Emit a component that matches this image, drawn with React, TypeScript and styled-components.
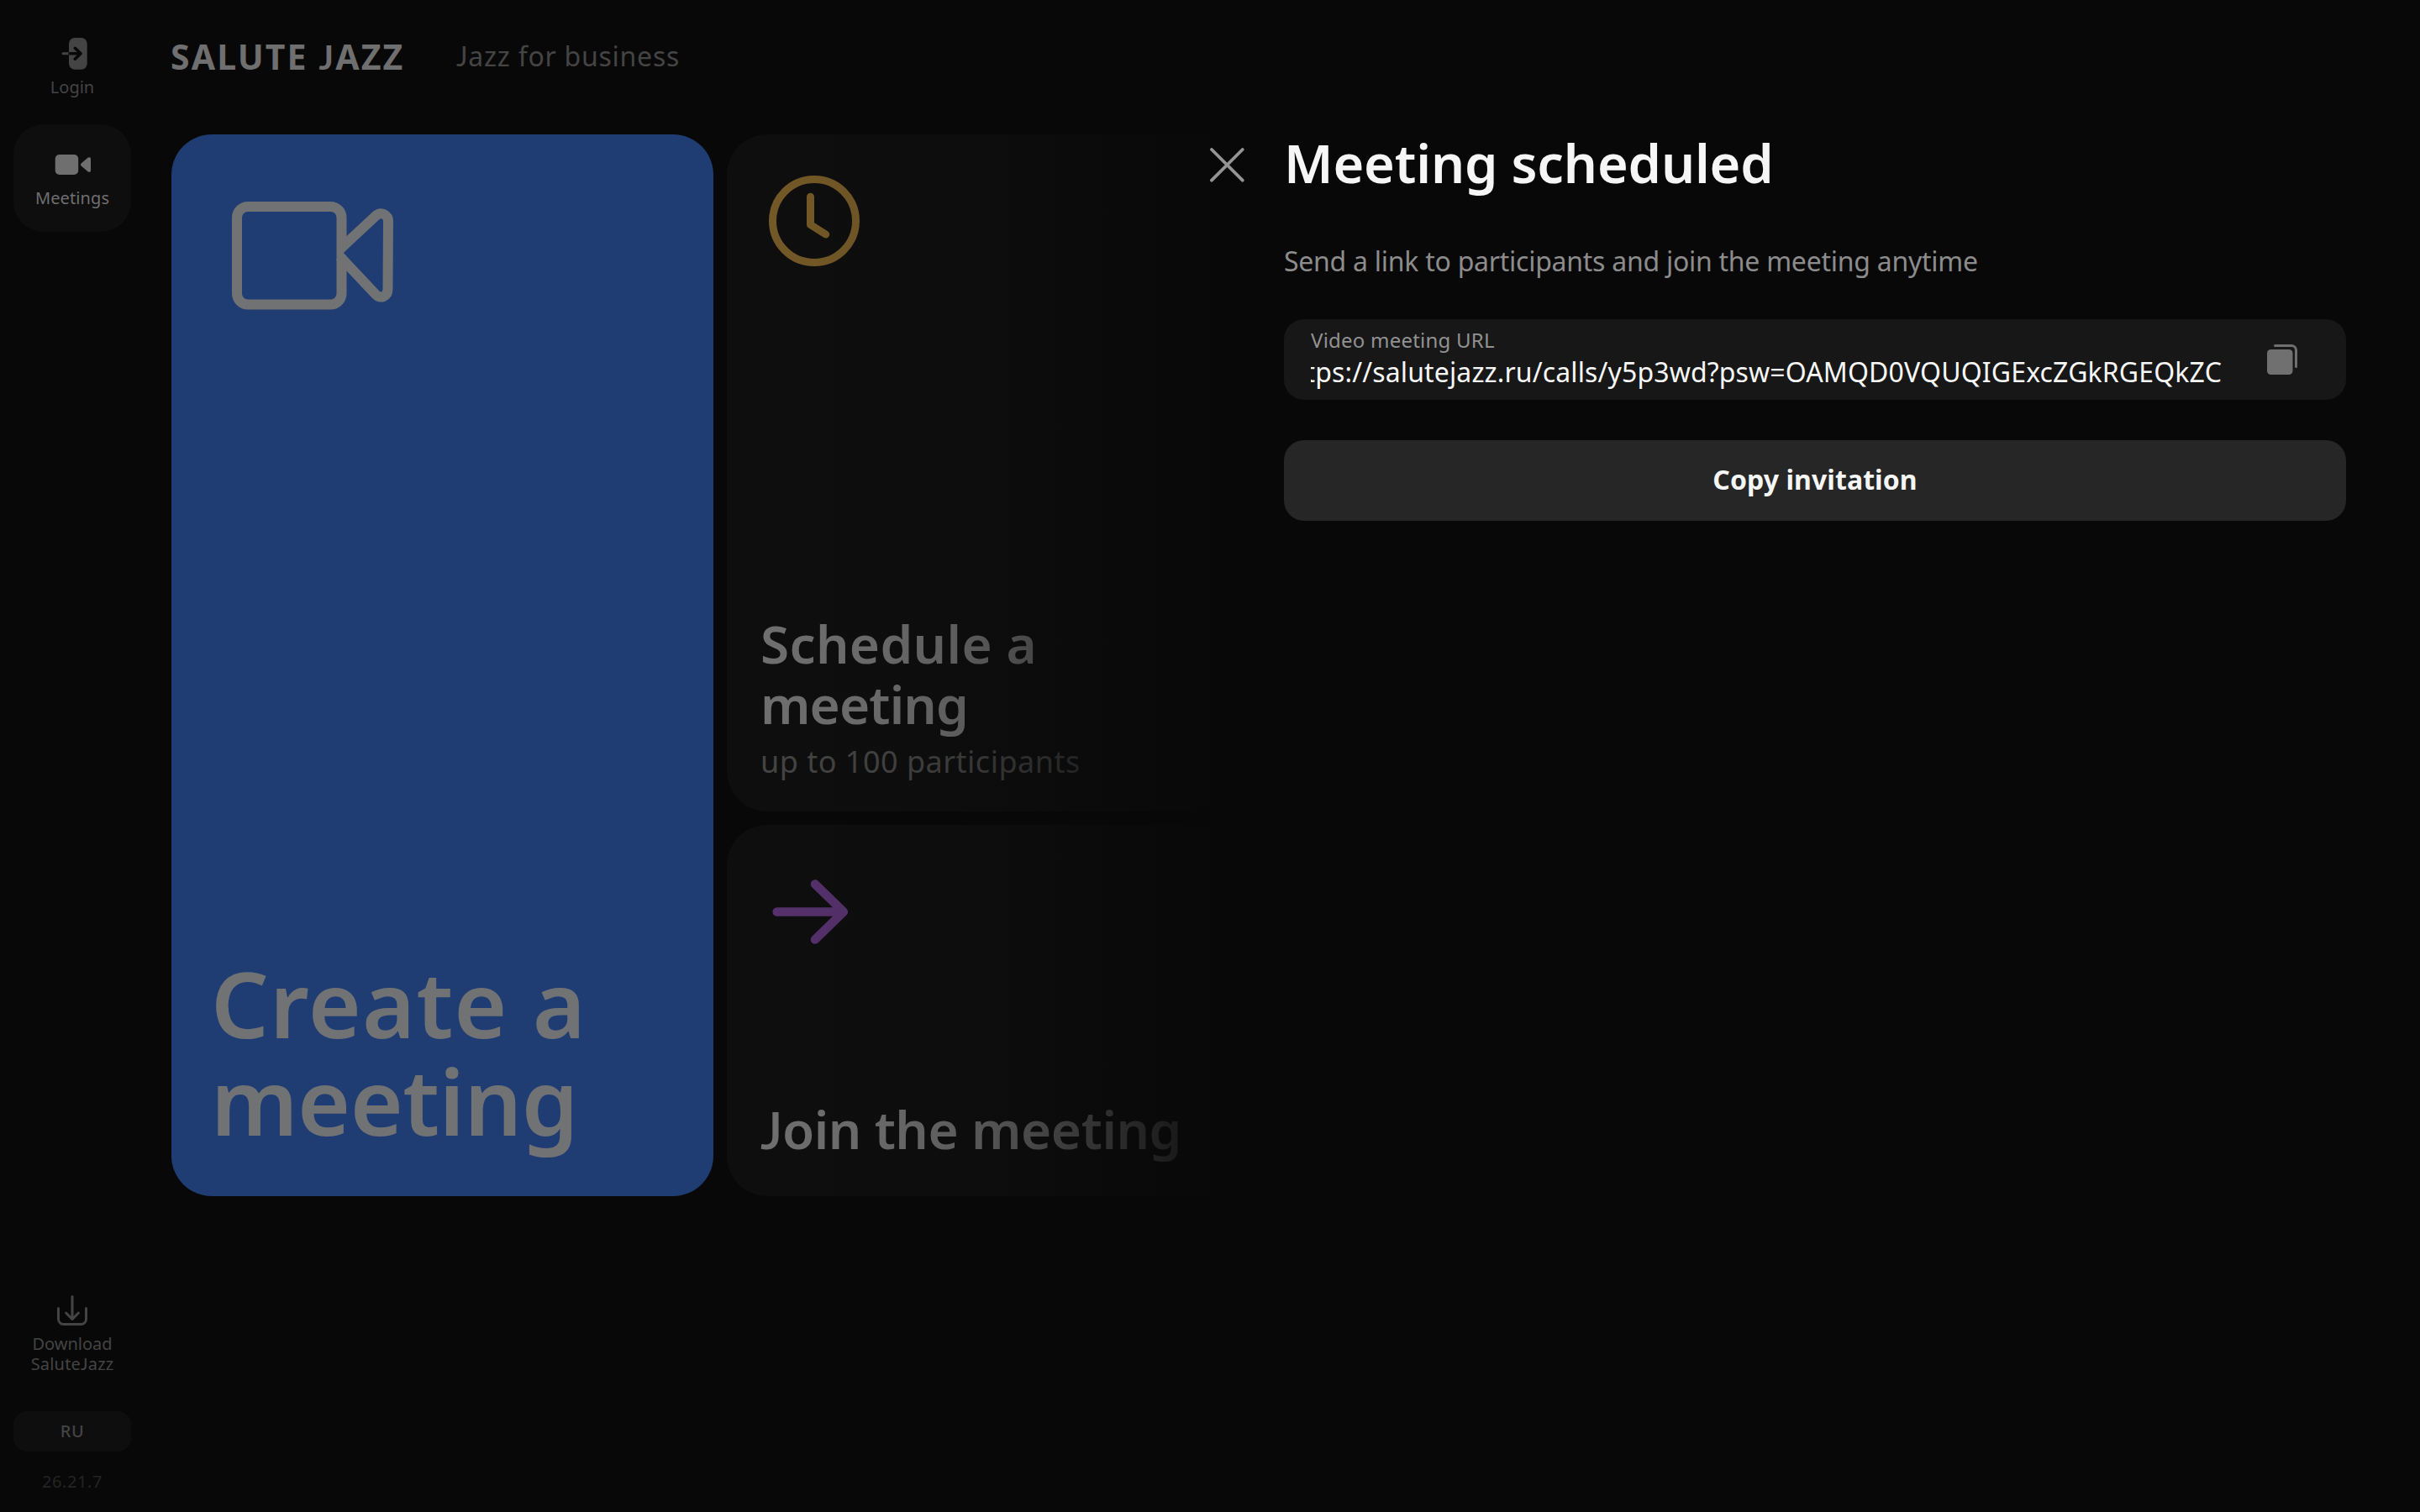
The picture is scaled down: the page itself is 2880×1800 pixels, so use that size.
import React from "react";
import styled, { createGlobalStyle } from "styled-components";

const color = {
  page: "#080808",
  surface: "#0e0e0e",
  blue: "#1f3d73",
  onBlue: "#707274",
  primary: "#6f6f6f",
  secondary: "#444444",
  tertiary: "#242424",
  amber: "#745927",
  violet: "#56316c",
  field: "#171717",
  button: "#262626",
  white: "#f6f6f6",
  muted: "#929292",
};

const GlobalStyle = createGlobalStyle`
  *, *::before, *::after { box-sizing: border-box; }
  body {
    margin: 0;
    background: ${color.page};
    font-family: "Noto Sans", "Open Sans", sans-serif;
  }
  h1, h2, p { margin: 0; }
  button { font: inherit; color: inherit; border: 0; padding: 0; background: none; }
  svg { display: block; flex: none; }
`;

const Shell = styled.div`
  position: relative;
  display: flex;
  width: 2880px;
  height: 1800px;
  overflow: hidden;
  background: ${color.page};
`;

const Sidebar = styled.nav`
  display: flex;
  flex-direction: column;
  flex: none;
  width: 172px;
  padding: 16px 16px 24px;
`;

const NavItem = styled.button<{ $active?: boolean; $tall?: boolean }>`
  display: flex;
  flex-direction: column;
  align-items: center;
  width: 140px;
  height: ${(p) => (p.$tall ? 152 : 128)}px;
  margin-bottom: ${(p) => (p.$tall ? 16 : 4)}px;
  padding-top: 24px;
  border-radius: 36px;
  background: ${(p) => (p.$active ? color.surface : "transparent")};
  color: ${(p) => (p.$active ? color.primary : color.secondary)};
`;

const NavLabel = styled.span<{ $track?: number; $first?: boolean }>`
  margin-top: ${(p) => (p.$first === false ? 0 : 4)}px;
  font-size: 20px;
  line-height: 24px;
  letter-spacing: ${(p) => p.$track ?? 0}px;
`;

const Spacer = styled.div`
  flex: 1;
`;

const LanguageButton = styled.button`
  width: 140px;
  height: 48px;
  border-radius: 16px;
  background: ${color.surface};
  color: ${color.secondary};
  font-size: 20px;
  font-weight: 500;
  line-height: 48px;
  letter-spacing: 0.6px;
`;

const Version = styled.span`
  width: 140px;
  margin-top: 24px;
  text-align: center;
  color: ${color.tertiary};
  font-size: 20px;
  line-height: 24px;
  letter-spacing: 0.58px;
`;

const Main = styled.main`
  display: flex;
  flex-direction: column;
  flex: none;
  padding-left: 32px;
`;

const Header = styled.header`
  display: flex;
  align-items: flex-start;
  height: 160px;
  padding-top: 43px;
`;

const Brand = styled.h1`
  width: 340px;
  color: ${color.primary};
  font-size: 41px;
  font-weight: 700;
  line-height: 48px;
  letter-spacing: 2.1px;
  margin-left: -1px;
`;

const HeaderLink = styled.span`
  margin-top: 4px;
  color: ${color.secondary};
  font-size: 32px;
  line-height: 40px;
  letter-spacing: 0.75px;
`;

/* Capital J that stands on the baseline instead of descending below it. */
const J = styled.span`
  font-family: Lato, "Noto Sans", sans-serif;
  line-height: 0;
`;

const Tiles = styled.div`
  display: grid;
  grid-template-columns: 645px 645px;
  grid-template-rows: 806px 442px;
  gap: 16px;
`;

const Tile = styled.section<{ $big?: boolean; $bottom: number; $iconTop: number; $iconLeft: number }>`
  display: flex;
  flex-direction: column;
  justify-content: space-between;
  grid-row: ${(p) => (p.$big ? "1 / span 2" : "auto")};
  padding: ${(p) => p.$iconTop}px 0 ${(p) => p.$bottom}px ${(p) => (p.$big ? 47 : 40)}px;
  border-radius: 48px;
  background: ${(p) => (p.$big ? color.blue : color.surface)};
  color: ${(p) => (p.$big ? color.onBlue : color.primary)};
  & > svg { margin-left: ${(p) => p.$iconLeft}px; }
`;

const TileTitle = styled.h2<{ $big?: boolean }>`
  font-size: ${(p) => (p.$big ? 108 : 62)}px;
  line-height: ${(p) => (p.$big ? 116 : 72)}px;
  font-weight: 600;
`;

const Line = styled.span<{ $track: number }>`
  display: block;
  white-space: nowrap;
  letter-spacing: ${(p) => p.$track}px;
`;

const TileNote = styled.p`
  margin-top: 11px;
  color: ${color.secondary};
  font-size: 36px;
  line-height: 44px;
  letter-spacing: 0.49px;
`;

const Overlay = styled.div`
  position: absolute;
  inset: 0;
  display: flex;
`;

const Fade = styled.div`
  width: 1440px;
  background: linear-gradient(
    90deg,
    rgba(8, 8, 8, 0) 900px,
    rgba(8, 8, 8, 0.06) 1040px,
    rgba(8, 8, 8, 0.18) 1140px,
    rgba(8, 8, 8, 0.36) 1220px,
    rgba(8, 8, 8, 0.58) 1300px,
    rgba(8, 8, 8, 0.82) 1400px,
    rgba(8, 8, 8, 0.9) 1440px
  );
`;

const Panel = styled.aside`
  display: flex;
  align-items: flex-start;
  gap: 48px;
  width: 1440px;
  padding-top: 158px;
  background: ${color.page};
`;

const CloseButton = styled.button`
  width: 40px;
  margin-top: 18px;
  color: #949494;
`;

const PanelBody = styled.div`
  display: flex;
  flex-direction: column;
  width: 1264px;
`;

const PanelTitle = styled.h2`
  color: ${color.white};
  font-size: 63px;
  font-weight: 600;
  line-height: 72px;
  letter-spacing: -0.15px;
`;

const PanelText = styled.p`
  margin-top: 61px;
  color: #8c8c8c;
  font-size: 32px;
  line-height: 40px;
  letter-spacing: -0.26px;
  white-space: nowrap;
`;

const Field = styled.div`
  display: flex;
  gap: 54px;
  height: 96px;
  margin-top: 49px;
  padding: 9px 32px 0;
  border-radius: 24px;
  background: ${color.field};
`;

const FieldBody = styled.div`
  display: flex;
  flex-direction: column;
  width: 1084px;
`;

const FieldLabel = styled.span`
  color: ${color.muted};
  font-size: 24px;
  line-height: 32px;
  letter-spacing: 0.23px;
`;

const FieldValue = styled.span`
  display: flex;
  justify-content: flex-end;
  overflow: hidden;
  margin-top: 2px;
  color: ${color.white};
  font-size: 32px;
  line-height: 40px;
  letter-spacing: 0.13px;
  white-space: nowrap;
`;

const CopyIconButton = styled.button`
  align-self: flex-start;
  margin-top: 21px;
  color: #707070;
`;

const InviteButton = styled.button`
  height: 96px;
  margin-top: 48px;
  padding-bottom: 2px;
  border-radius: 24px;
  background: ${color.button};
  color: ${color.white};
  font-size: 32px;
  font-weight: 700;
  line-height: 94px;
  letter-spacing: 0.08px;
`;

const LoginIcon = () => (
  <svg width="48" height="48" viewBox="0 0 48 48" fill="none" strokeLinecap="round" strokeLinejoin="round">
    <rect x="20" y="5" width="21.7" height="37.7" rx="7" fill="currentColor" />
    <path d="M13 23.8H20" stroke="currentColor" strokeWidth="3" />
    <path d="M21 23.8H34M27.3 17.3L34 23.8L27.3 30.2" stroke={color.page} strokeWidth="3.6" />
  </svg>
);

const CameraSolidIcon = () => (
  <svg width="48" height="48" viewBox="0 0 48 48" fill="currentColor">
    <rect x="3.7" y="12" width="27.5" height="24" rx="5" />
    <path d="M34.6 22.6L42.5 15.7C43.6 14.7 46 15 46 16.8V31.2C46 33 43.6 33.3 42.5 32.3L34.6 25.4C33.8 24.6 33.8 23.4 34.6 22.6Z" />
  </svg>
);

const DownloadIcon = () => (
  <svg width="48" height="48" viewBox="0 0 48 48" fill="none" stroke="currentColor" strokeWidth="3" strokeLinecap="round" strokeLinejoin="round">
    <path d="M7.5 21.5V34.5A6 6 0 0 0 13.5 40.5H34.5A6 6 0 0 0 40.5 34.5V21.5" />
    <path d="M24 7.5V34.5M16.6 27L24 34.5L31.4 27" />
  </svg>
);

const CameraIcon = () => (
  <svg width="192" height="129" viewBox="0 0 192 129" fill="none">
    <rect x="6" y="6" width="124.5" height="116.5" rx="13" stroke="currentColor" strokeWidth="12" />
    <path d="M132.7 61L177 19.5V108Z" fill={color.blue} />
    <path
      d="M128.6 56.6L171.6 16.6C177.5 11.5 186 15.5 186 23.5L185.5 104C185.5 113 176.5 116.5 171.3 110.8L128.3 65.1"
      stroke="currentColor"
      strokeWidth="12"
    />
  </svg>
);

const ClockIcon = () => (
  <svg width="108" height="108" viewBox="0 0 108 108" fill="none" stroke={color.amber} strokeWidth="9" strokeLinecap="round" strokeLinejoin="round">
    <circle cx="54" cy="54" r="49.5" />
    <path d="M49.5 25.2V58.5L67.7 70" />
  </svg>
);

const ArrowIcon = () => (
  <svg width="91" height="77" viewBox="0 0 91 77" fill="none" stroke={color.violet} strokeWidth="10.5" strokeLinecap="round" strokeLinejoin="round">
    <path d="M5.7 38.5H84.6M51 5.5L84.9 38.5L51 71.5" />
  </svg>
);

const CloseIcon = () => (
  <svg width="41" height="41" viewBox="0 0 41 41" fill="none" stroke="currentColor" strokeWidth="3.8" strokeLinecap="round">
    <path d="M2 2L38.7 38.7M38.7 2L2 38.7" />
  </svg>
);

const CopyIcon = () => (
  <svg width="36" height="36" viewBox="0 0 36 36" fill="none">
    <rect x="0" y="6" width="30.5" height="30" rx="4.5" fill="currentColor" />
    <path d="M9.5 1.5H29A5.5 5.5 0 0 1 34.5 7V26.5" stroke="currentColor" strokeWidth="3" strokeLinecap="round" />
  </svg>
);

export default function App() {
  return (
    <>
      <GlobalStyle />
      <Shell>
        <Sidebar>
          <NavItem>
            <LoginIcon />
            <NavLabel>Login</NavLabel>
          </NavItem>
          <NavItem $active>
            <CameraSolidIcon />
            <NavLabel $track={0.1}>Meetings</NavLabel>
          </NavItem>
          <Spacer />
          <NavItem $tall>
            <DownloadIcon />
            <NavLabel>Download</NavLabel>
            <NavLabel $first={false} $track={0.2}>
              Salute<J>J</J>azz
            </NavLabel>
          </NavItem>
          <LanguageButton>RU</LanguageButton>
          <Version>26.21.7</Version>
        </Sidebar>
        <Main>
          <Header>
            <Brand>
              SALUTE <J>J</J>AZZ
            </Brand>
            <HeaderLink>
              <J>J</J>azz for business
            </HeaderLink>
          </Header>
          <Tiles>
            <Tile $big $bottom={55} $iconTop={80} $iconLeft={25}>
              <CameraIcon />
              <TileTitle $big>
                <Line $track={1.1}>Create a</Line>
                <Line $track={-0.6}>meeting</Line>
              </TileTitle>
            </Tile>
            <Tile $bottom={37} $iconTop={49} $iconLeft={10}>
              <ClockIcon />
              <div>
                <TileTitle>
                  <Line $track={0.35}>Schedule a</Line>
                  <Line $track={-0.9}>meeting</Line>
                </TileTitle>
                <TileNote>up to 100 participants</TileNote>
              </div>
            </Tile>
            <Tile $bottom={44} $iconTop={65} $iconLeft={14}>
              <ArrowIcon />
              <TileTitle>
                <Line $track={-0.45}>
                  <J>J</J>oin the meeting
                </Line>
              </TileTitle>
            </Tile>
          </Tiles>
        </Main>
        <Overlay>
          <Fade />
          <Panel>
            <CloseButton aria-label="Close">
              <CloseIcon />
            </CloseButton>
            <PanelBody>
              <PanelTitle>Meeting scheduled</PanelTitle>
              <PanelText>Send a link to participants and join the meeting anytime</PanelText>
              <Field>
                <FieldBody>
                  <FieldLabel>Video meeting URL</FieldLabel>
                  <FieldValue>https://salutejazz.ru/calls/y5p3wd?psw=OAMQD0VQUQIGExcZGkRGEQkZC</FieldValue>
                </FieldBody>
                <CopyIconButton aria-label="Copy link">
                  <CopyIcon />
                </CopyIconButton>
              </Field>
              <InviteButton>Copy invitation</InviteButton>
            </PanelBody>
          </Panel>
        </Overlay>
      </Shell>
    </>
  );
}
